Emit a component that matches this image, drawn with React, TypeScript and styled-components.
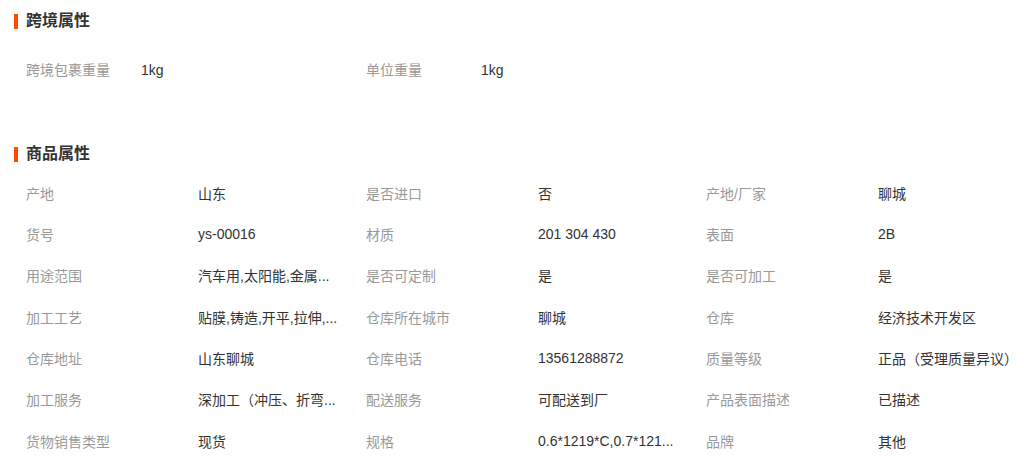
import React from "react";
import styled, { createGlobalStyle } from "styled-components";

const Global = createGlobalStyle`
  html, body { margin: 0; padding: 0; background: #fff; }
  body {
    font-family: "Liberation Sans", "Noto Sans CJK SC", sans-serif;
    font-size: 14px;
    color: #333;
  }
`;

const Page = styled.div`
  width: 1024px;
  padding-left: 14px;
  box-sizing: border-box;
`;

const Section = styled.section<{ $top: number }>`
  margin-top: ${(p) => p.$top}px;
`;

const Title = styled.h2`
  display: flex;
  align-items: center;
  height: 36px;
  margin: 0;
  font-size: 16px;
  font-weight: bold;
  color: #333;
  line-height: 20px;
  &::before {
    content: "";
    display: block;
    width: 4px;
    height: 15px;
    background: #ff4a00;
    margin-right: 8px;
  }
`;

const CrossList = styled.div`
  display: flex;
  padding-top: 17px;
  padding-left: 12px;
`;

const CrossItem = styled.div`
  display: flex;
  width: 340px;
  height: 28px;
  align-items: center;
  line-height: 28px;
`;

const CrossLabel = styled.span`
  width: 115px;
  color: #999;
  white-space: nowrap;
`;

const Grid = styled.div`
  display: grid;
  grid-template-columns: repeat(3, 340px);
  grid-auto-rows: 41.33px;
  padding-left: 12px;
`;

const Cell = styled.div`
  display: flex;
  align-items: center;
  min-width: 0;
`;

const Label = styled.span`
  width: 172px;
  flex: none;
  color: #999;
  white-space: nowrap;
`;

const Value = styled.span`
  max-width: 150px;
  color: #333;
  white-space: nowrap;
  overflow: hidden;
  text-overflow: ellipsis;
`;

const attrs: [string, string][] = [
  ["产地", "山东"],
  ["是否进口", "否"],
  ["产地/厂家", "聊城"],
  ["货号", "ys-00016"],
  ["材质", "201 304 430"],
  ["表面", "2B"],
  ["用途范围", "汽车用,太阳能,金属..."],
  ["是否可定制", "是"],
  ["是否可加工", "是"],
  ["加工工艺", "贴膜,铸造,开平,拉伸,..."],
  ["仓库所在城市", "聊城"],
  ["仓库", "经济技术开发区"],
  ["仓库地址", "山东聊城"],
  ["仓库电话", "13561288872"],
  ["质量等级", "正品（受理质量异议）"],
  ["加工服务", "深加工（冲压、折弯..."],
  ["配送服务", "可配送到厂"],
  ["产品表面描述", "已描述"],
  ["货物销售类型", "现货"],
  ["规格", "0.6*1219*C,0.7*121..."],
  ["品牌", "其他"],
];

export default function App() {
  return (
    <Page>
      <Global />
      <Section $top={3}>
        <Title>跨境属性</Title>
        <CrossList>
          <CrossItem>
            <CrossLabel>跨境包裹重量</CrossLabel>
            <span>1kg</span>
          </CrossItem>
          <CrossItem>
            <CrossLabel>单位重量</CrossLabel>
            <span>1kg</span>
          </CrossItem>
        </CrossList>
      </Section>
      <Section $top={52}>
        <Title>商品属性</Title>
        <Grid>
          {attrs.map(([k, v]) => (
            <Cell key={k}>
              <Label>{k}</Label>
              <Value>{v}</Value>
            </Cell>
          ))}
        </Grid>
      </Section>
    </Page>
  );
}
